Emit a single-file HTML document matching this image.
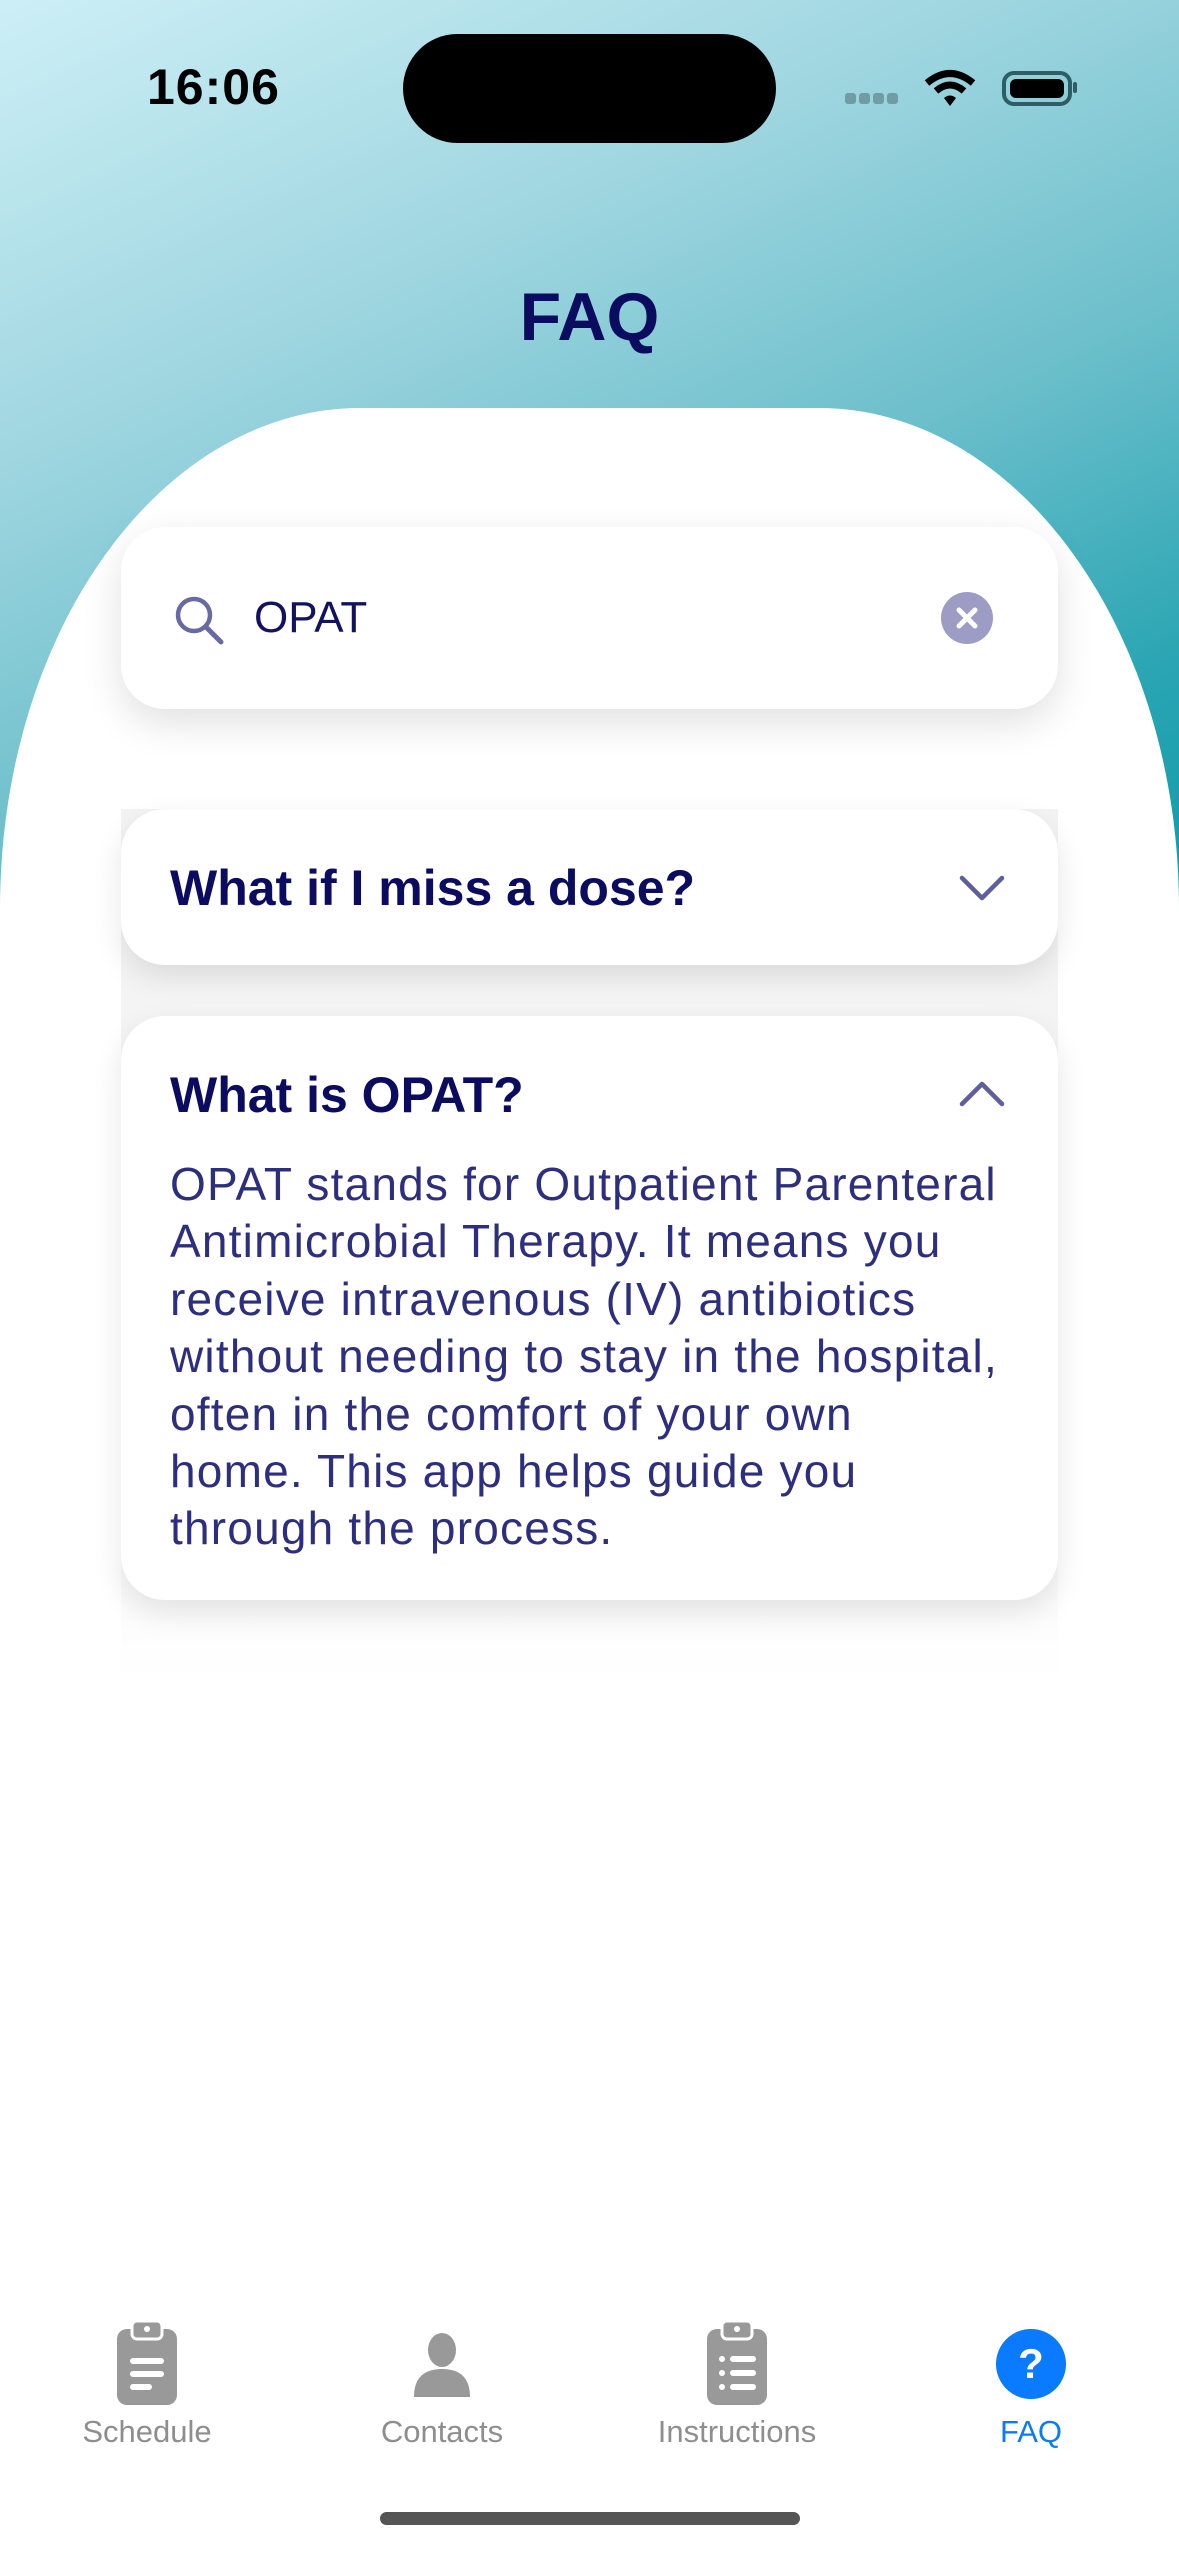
<!DOCTYPE html>
<html><head><meta charset="utf-8"><style>
*{margin:0;padding:0;box-sizing:border-box}
body{width:1179px;height:2556px;position:relative;overflow:hidden;background:#fff;font-family:"Liberation Sans",sans-serif}
.bg{position:absolute;left:0;top:0;width:1179px;height:1000px;background:linear-gradient(155deg,#cdeff6 0%,#9fd6e0 30%,#6cbfcb 55%,#2aa5b3 78%,#0597a6 100%)}
.sheet{position:absolute;left:0;top:408px;width:1179px;height:2148px;background:#fff;border-top-left-radius:360px 500px;border-top-right-radius:360px 500px}
.time{position:absolute;left:147px;top:58px;font-size:50px;font-weight:bold;color:#000;letter-spacing:1px}
.island{position:absolute;left:403px;top:34px;width:373px;height:109px;background:#000;border-radius:55px}
.title{position:absolute;left:0;width:1179px;top:278px;text-align:center;font-size:68px;font-weight:bold;color:#0b0b60}
.search{position:absolute;left:121px;top:527px;width:937px;height:182px;background:#fff;border-radius:44px;box-shadow:0 14px 40px rgba(0,0,0,.12)}
.search .t{position:absolute;left:133px;top:66px;font-size:44px;color:#12125e}
.clear{position:absolute;left:820px;top:65px;width:52px;height:52px;border-radius:50%;background:#9d9cc4}
.card{position:absolute;left:121px;width:937px;background:#fff;border-radius:44px;box-shadow:0 12px 30px rgba(0,0,0,.10)}
.q{position:absolute;left:49px;font-size:50px;font-weight:bold;color:#0b0b60}
.a{position:absolute;left:49px;top:140px;width:880px;font-size:46px;letter-spacing:1.2px;line-height:57.4px;color:#2e2e7e;white-space:nowrap}
.tab{position:absolute;top:2414px;width:260px;text-align:center;font-size:31px;color:#8e8e8e}
.home{position:absolute;left:380px;top:2512px;width:420px;height:13px;border-radius:7px;background:#555}
</style></head><body>
<div class="bg"></div>
<div class="sheet"></div>
<div class="time">16:06</div>
<div class="island"></div>
<svg style="position:absolute;left:843px;top:68px" width="240" height="40" viewBox="0 0 240 40">
<g fill="#6f9da3"><rect x="2" y="25" width="11" height="11" rx="3"/><rect x="16" y="25" width="11" height="11" rx="3"/><rect x="30" y="25" width="11" height="11" rx="3"/><rect x="44" y="25" width="11" height="11" rx="3"/></g>
<path d="M84 15 Q107 -4 130 15" stroke="#000" stroke-width="7" fill="none"/><path d="M93 23 Q107 11 121 23" stroke="#000" stroke-width="7" fill="none"/><path d="M101 30 L107 38 L113 30 Q107 25 101 30Z" fill="#000"/>
<rect x="161" y="5" width="66" height="31" rx="10" fill="none" stroke="#2d5e66" stroke-width="4"/><rect x="167" y="11" width="54" height="19" rx="6" fill="#000"/><rect x="230" y="14" width="4" height="11" rx="2" fill="#2d5e66"/>
</svg>
<div class="title">FAQ</div>
<div style="position:absolute;left:121px;top:809px;width:937px;height:870px;background:linear-gradient(#f3f3f3,#f7f7f7 80%,#fff)"></div>
<div class="search">
<svg style="position:absolute;left:52px;top:67px" width="54" height="54" viewBox="0 0 54 54"><circle cx="21" cy="21" r="16" fill="none" stroke="#6a6aa3" stroke-width="4.5"/><path d="M33 33 L48 48" stroke="#6a6aa3" stroke-width="5" stroke-linecap="round"/></svg>
<div class="t">OPAT</div>
<div class="clear"><svg width="52" height="52" viewBox="0 0 52 52"><path d="M18 18L34 34M34 18L18 34" stroke="#fff" stroke-width="5" stroke-linecap="round"/></svg></div>
</div>
<div class="card" style="top:809px;height:156px">
<div class="q" style="top:50px">What if I miss a dose?</div>
<svg style="position:absolute;left:838px;top:64px" width="46" height="30" viewBox="0 0 46 30"><path d="M3 5L23 25L43 5" stroke="#5f5f9b" stroke-width="4.5" fill="none" stroke-linecap="round" stroke-linejoin="round"/></svg>
</div>
<div class="card" style="top:1016px;height:584px">
<div class="q" style="top:50px">What is OPAT?</div>
<svg style="position:absolute;left:838px;top:63px" width="46" height="30" viewBox="0 0 46 30"><path d="M3 25L23 5L43 25" stroke="#5f5f9b" stroke-width="4.5" fill="none" stroke-linecap="round" stroke-linejoin="round"/></svg>
<div class="a">OPAT stands for Outpatient Parenteral<br>Antimicrobial Therapy. It means you<br>receive intravenous (IV) antibiotics<br>without needing to stay in the hospital,<br>often in the comfort of your own<br>home. This app helps guide you<br>through the process.</div>
</div>
<svg style="position:absolute;left:117px;top:2321px" width="60" height="84" viewBox="0 0 60 84"><rect x="0" y="8" width="60" height="76" rx="10" fill="#999"/><rect x="15" y="0" width="30" height="18" rx="5" fill="#999" stroke="#fff" stroke-width="3"/><circle cx="30" cy="8" r="3" fill="#fff"/><g stroke="#fff" stroke-width="6" stroke-linecap="round"><path d="M16 40H44M16 53H44M16 66H32"/></g></svg>
<svg style="position:absolute;left:412px;top:2333px" width="60" height="64" viewBox="0 0 60 64"><ellipse cx="30" cy="17" rx="14" ry="17" fill="#999"/><path d="M2 64 Q2 36 30 36 Q58 36 58 64Z" fill="#999"/></svg>
<svg style="position:absolute;left:707px;top:2321px" width="60" height="84" viewBox="0 0 60 84"><rect x="0" y="8" width="60" height="76" rx="10" fill="#999"/><rect x="15" y="0" width="30" height="18" rx="5" fill="#999" stroke="#fff" stroke-width="3"/><circle cx="30" cy="8" r="3" fill="#fff"/><g stroke="#fff" stroke-width="6" stroke-linecap="round"><path d="M26 38H46M26 52H46M26 66H46"/></g><g fill="#fff"><circle cx="15" cy="38" r="3"/><circle cx="15" cy="52" r="3"/><circle cx="15" cy="66" r="3"/></g></svg>
<svg style="position:absolute;left:996px;top:2329px" width="70" height="70" viewBox="0 0 70 70"><circle cx="35" cy="35" r="35" fill="#0a7aff"/><text x="35" y="49" text-anchor="middle" font-family="Liberation Sans" font-weight="bold" font-size="42" fill="#fff">?</text></svg>
<div class="tab" style="left:17px">Schedule</div>
<div class="tab" style="left:312px">Contacts</div>
<div class="tab" style="left:607px">Instructions</div>
<div class="tab" style="left:901px;color:#0a7aff">FAQ</div>
<div class="home"></div>
</body></html>
